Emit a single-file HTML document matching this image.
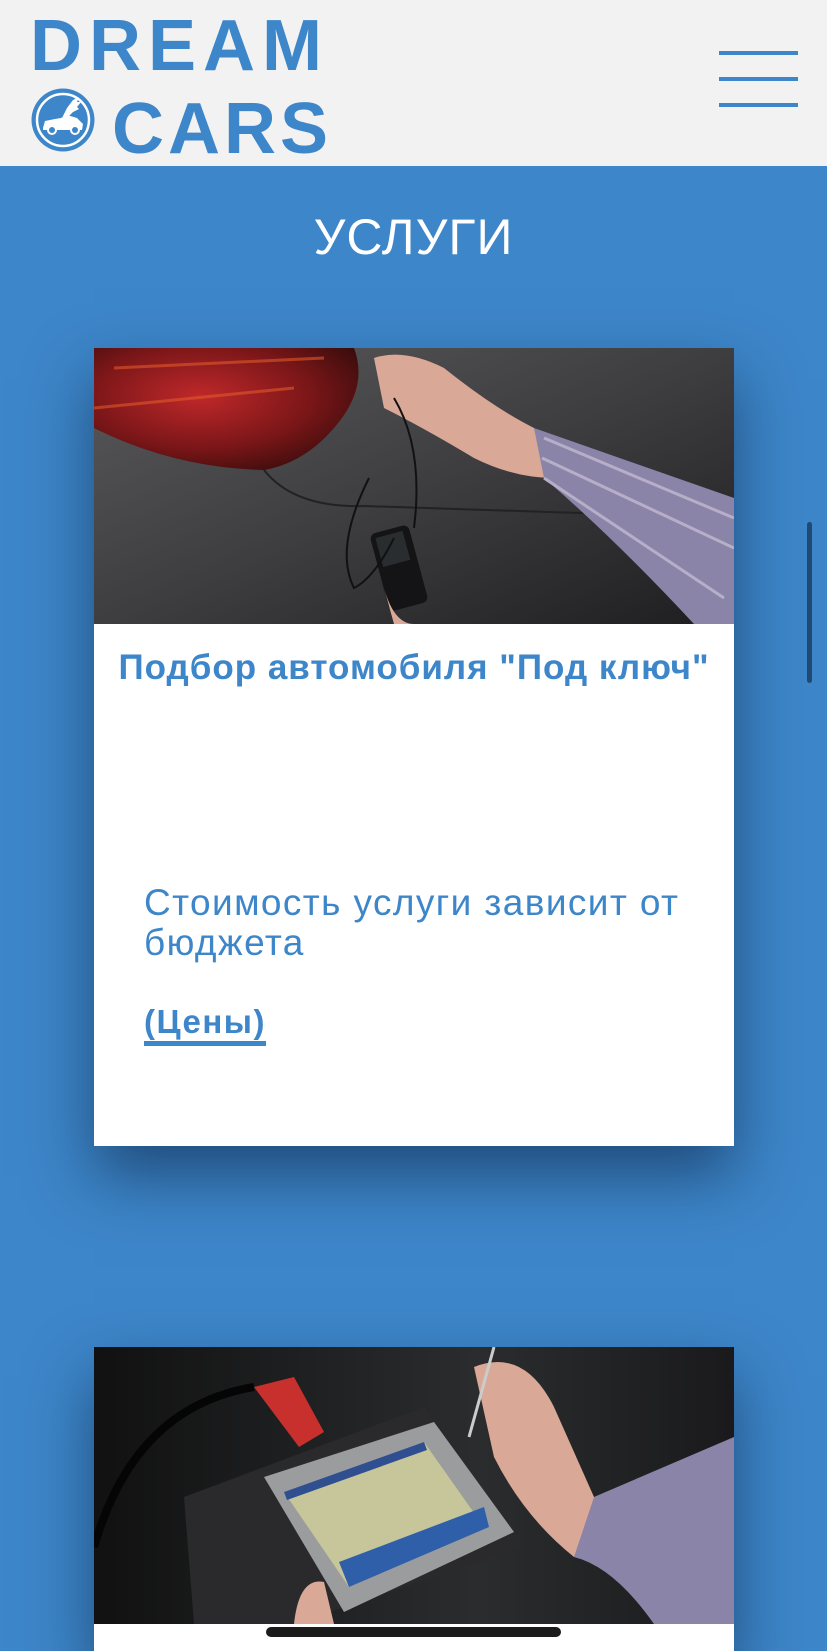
<!DOCTYPE html>
<html><head><meta charset="utf-8">
<style>
*{margin:0;padding:0;box-sizing:border-box}
html,body{width:827px;height:1651px;overflow:hidden}
body{background:#3d86c9;font-family:"Liberation Sans",sans-serif;position:relative}
.hdr{position:absolute;left:0;top:0;width:827px;height:166px;background:#f2f2f2}
.logo{position:absolute;color:#3d86c9;font-weight:bold;font-size:72px;line-height:1}
.hb{position:absolute;left:719px;width:79px;height:4px;background:#3d86c9}
h1{position:absolute;top:208px;left:0;width:827px;text-align:center;color:#fff;font-weight:normal;font-size:50px;letter-spacing:1px}
.card{position:absolute;left:94px;width:640px;background:#fff;box-shadow:0 30px 60px rgba(10,30,60,.55);overflow:hidden}
.t{position:absolute;left:0;width:640px;text-align:center;color:#3d86c9;font-weight:bold;font-size:35px;letter-spacing:1px;white-space:nowrap}
.p{position:absolute;left:50px;color:#3d86c9;font-size:37px;line-height:40px;letter-spacing:1.4px;white-space:nowrap}
.lnk{position:absolute;left:50px;color:#3d86c9;font-weight:bold;font-size:33px;letter-spacing:1.5px;border-bottom:5px solid #3d86c9;line-height:38px}
</style></head><body>
<div class="hdr">
 <div class="logo" style="left:30px;top:10px;letter-spacing:7px">DREAM</div>
 <div class="logo" style="left:112px;top:93px;letter-spacing:4px">CARS</div>
 <svg style="position:absolute;left:31px;top:88px" width="64" height="64" viewBox="0 0 64 64">
  <circle cx="32" cy="32" r="31.5" fill="#3d86c9"/><circle cx="32" cy="32" r="26" fill="none" stroke="#fff" stroke-width="2.5"/>
  <path d="M12 40 L14 33 L24 31 L30 30 L36 27 L46 30 L52 36 L51 42 L12 42 Z" fill="#fff"/>
  <path d="M31 30 L36 20 L42 12 L48 9 L46 14 L50 14 L46 19 L48 21 L42 24 L38 28 Z" fill="#fff"/>
  <circle cx="21" cy="42" r="4" fill="#3d86c9" stroke="#fff" stroke-width="2"/><circle cx="44" cy="42" r="4" fill="#3d86c9" stroke="#fff" stroke-width="2"/>
 </svg>
 <div class="hb" style="top:51px"></div><div class="hb" style="top:77px"></div><div class="hb" style="top:103px"></div>
</div>
<h1>УСЛУГИ</h1>

<div class="card" style="top:348px;height:798px">
 <svg width="640" height="276" viewBox="0 0 640 276" style="display:block">
  <defs><linearGradient id="g1" x1="0" y1="0" x2="1" y2="1"><stop offset="0" stop-color="#5a5a5c"/><stop offset=".5" stop-color="#3e3e40"/><stop offset="1" stop-color="#1e1e20"/></linearGradient>
  <radialGradient id="r1" cx=".4" cy=".4" r=".7"><stop offset="0" stop-color="#c0282a"/><stop offset=".6" stop-color="#7a1618"/><stop offset="1" stop-color="#3a0c0c"/></radialGradient></defs>
  <rect width="640" height="276" fill="url(#g1)"/>
  <path d="M0 0 L260 0 Q275 40 240 80 Q210 115 170 122 Q80 120 0 80 Z" fill="url(#r1)"/>
  <path d="M0 60 L200 40 M20 20 L230 10" stroke="#e0582a" stroke-width="3" opacity=".6"/>
  <path d="M170 122 Q200 160 270 158 L640 170" stroke="#222" stroke-width="2" fill="none"/>
  <path d="M280 10 Q310 0 350 20 Q400 60 440 80 L460 130 Q420 130 380 110 Q330 80 290 60 Z" fill="#d9a896"/>
  <path d="M440 80 L640 150 L640 276 L600 276 Q520 190 450 130 Z" fill="#8a84a8"/>
  <path d="M450 90 L640 170 M448 110 L640 200 M450 130 L630 250" stroke="#b7aec8" stroke-width="3"/>
  <rect x="285" y="180" width="40" height="80" rx="6" fill="#141416" transform="rotate(-15 305 220)"/>
  <rect x="290" y="185" width="28" height="30" fill="#2a2d30" transform="rotate(-15 305 220)"/>
  <path d="M290 240 Q300 276 320 276 L300 276 Z" fill="#d9a896"/>
  <path d="M300 50 Q330 100 320 180 M275 130 Q240 200 260 240 Q280 230 300 190" stroke="#111" stroke-width="2" fill="none"/>
 </svg>
 <div class="t" style="top:300px">Подбор автомобиля "Под ключ"</div>
 <div class="p" style="top:535px">Стоимость услуги зависит от<br>бюджета</div>
 <div class="lnk" style="top:655px">(Цены)</div>
</div>

<div class="card" style="top:1347px;height:304px">
 <svg width="640" height="277" viewBox="0 0 640 277" style="display:block">
  <defs><linearGradient id="g2" x1="0" y1="0" x2="1" y2="0"><stop offset="0" stop-color="#111"/><stop offset=".6" stop-color="#2a2c2e"/><stop offset="1" stop-color="#1a1a1c"/></linearGradient></defs>
  <rect width="640" height="277" fill="url(#g2)"/>
  <path d="M0 200 Q40 60 160 40" stroke="#050505" stroke-width="8" fill="none"/>
  <path d="M160 40 L200 30 L230 85 L205 100 Z" fill="#c8302e"/>
  <path d="M90 150 L330 60 L430 200 L200 277 L100 277 Z" fill="#2a2a2c"/>
  <path d="M170 130 L340 75 L420 185 L250 265 Z" fill="#9a9c9e"/>
  <path d="M190 145 L330 95 L390 180 L255 240 Z" fill="#c7c59a"/>
  <path d="M245 215 L390 160 L395 180 L255 240 Z" fill="#2f5fa8"/>
  <path d="M190 145 L330 95 L333 103 L193 153 Z" fill="#2f4f90"/>
  <path d="M380 20 Q430 0 460 60 L500 150 Q520 200 480 210 Q430 170 400 110 Z" fill="#d9a896"/>
  <path d="M500 150 L640 90 L640 277 L560 277 Q520 220 480 210 Z" fill="#8a84a8"/>
  <path d="M200 277 Q205 230 230 235 L240 277 Z" fill="#d9a896"/>
  <path d="M400 0 L375 90" stroke="#ccc" stroke-width="3"/>
 </svg>
</div>

<div style="position:absolute;left:807px;top:522px;width:5px;height:161px;border-radius:3px;background:#1f4a73"></div>
<div style="position:absolute;left:266px;top:1627px;width:295px;height:10px;border-radius:5px;background:#1b1b1b"></div>
</body></html>
